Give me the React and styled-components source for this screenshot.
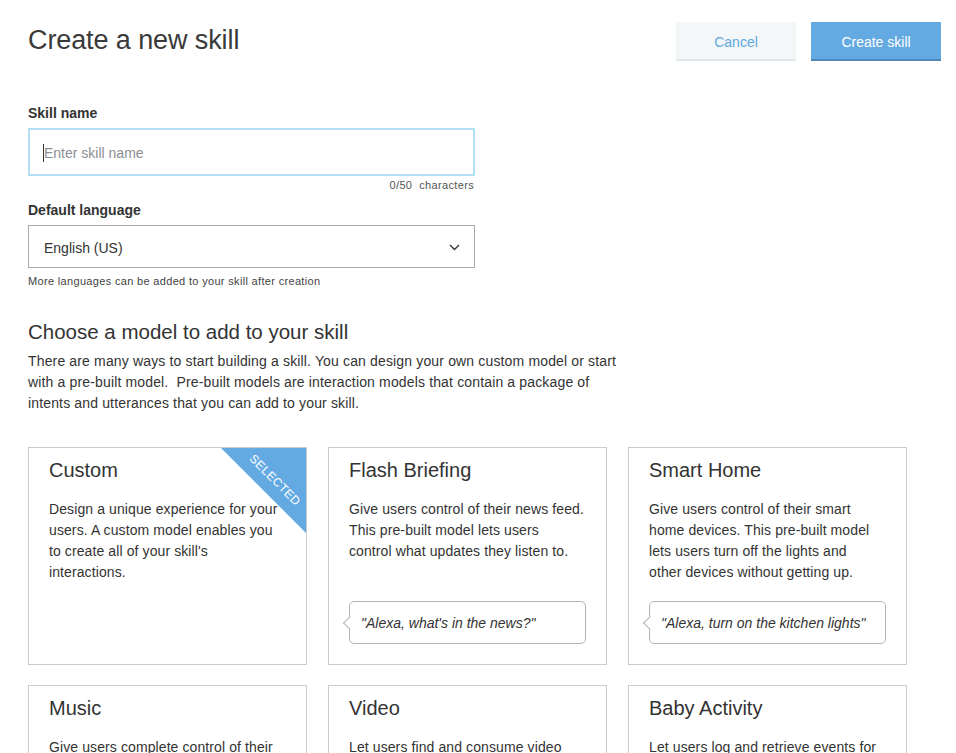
import React from "react";
import styled, { createGlobalStyle } from "styled-components";

const GlobalStyle = createGlobalStyle`
  html, body, #root { height: 100%; }
  body {
    margin: 0;
    background: #ffffff;
    color: #333333;
    font-family: "Liberation Sans", Arial, sans-serif;
  }
  * { box-sizing: border-box; }
`;

const Page = styled.div`
  height: 100vh;
  overflow: hidden;
  padding: 22px 15px 0 28px;
`;

const Header = styled.header`
  display: flex;
  justify-content: space-between;
  align-items: center;
  height: 39px;
`;

const Title = styled.h1`
  margin: 0 0 4px;
  font-size: 27px;
  font-weight: 400;
  line-height: 36px;
  color: #3a3a3a;
  letter-spacing: -0.1px;
`;

const ButtonRow = styled.div`
  display: flex;
  gap: 15px;
`;

const Button = styled.button`
  width: ${(p) => (p.$primary ? "130px" : "120px")};
  height: 39px;
  border: none;
  border-bottom: 2px solid ${(p) => (p.$primary ? "#4f88ba" : "#dfe7ea")};
  background: ${(p) => (p.$primary ? "#64aae2" : "#f3f7f8")};
  color: ${(p) => (p.$primary ? "#ffffff" : "#5ea8df")};
  font-family: inherit;
  font-size: 14px;
  padding: 3px 0 0;
  cursor: pointer;
`;

const Form = styled.section`
  width: 447px;
  margin-top: 42px;
`;

const Label = styled.div`
  font-size: 14px;
  font-weight: 700;
  line-height: 20px;
  color: #333333;
  margin-top: ${(p) => p.$mt || 0}px;
  margin-bottom: 5px;
`;

const InputWrap = styled.div`
  position: relative;
`;

const Input = styled.input`
  display: block;
  width: 100%;
  height: 48px;
  border: 2px solid #b2def6;
  outline: none;
  padding: 2px 14px 0;
  font-family: inherit;
  font-size: 14px;
  color: #333;
  &::placeholder { color: #8a8f94; }
`;

const Caret = styled.span`
  position: absolute;
  left: 15px;
  top: 16px;
  width: 1px;
  height: 18px;
  background: #333;
`;

const Counter = styled.div`
  text-align: right;
  font-size: 11px;
  line-height: 14px;
  margin-top: 2px;
  padding-right: 1px;
  color: #555;
  letter-spacing: 0.35px;
  white-space: pre;
`;

const Select = styled.div`
  display: flex;
  align-items: center;
  justify-content: space-between;
  height: 43px;
  border: 1px solid #a9a9a9;
  padding: 2px 14px 0 15px;
  font-size: 14px;
  color: #333;
`;

const Helper = styled.div`
  font-size: 11px;
  line-height: 14px;
  margin-top: 6px;
  letter-spacing: 0.33px;
  color: #444;
`;

const Heading = styled.h2`
  margin: 31px 0 6px;
  font-size: 20.5px;
  font-weight: 400;
  line-height: 26px;
  color: #333;
`;

const Intro = styled.p`
  margin: 0;
  width: 660px;
  font-size: 14px;
  line-height: 21px;
  letter-spacing: 0.15px;
  color: #333;
`;

const CardGrid = styled.div`
  margin-top: 33px;
  display: grid;
  grid-template-columns: repeat(3, 279px);
  column-gap: 21px;
  row-gap: 20px;
`;

const Card = styled.div`
  position: relative;
  height: 218px;
  border: 1px solid #cccccc;
  padding: 10px 20px 20px;
  display: flex;
  flex-direction: column;
  overflow: hidden;
`;

const CardTitle = styled.h3`
  margin: 0;
  font-size: 20px;
  font-weight: 400;
  line-height: 24px;
  color: #333;
`;

const CardText = styled.p`
  margin: 17px 0 0;
  font-size: 14px;
  line-height: 21px;
  letter-spacing: 0.1px;
  white-space: nowrap;
  color: #333;
`;

const Bubble = styled.div`
  position: relative;
  margin-top: auto;
  height: 43px;
  border: 1px solid #b4b4b4;
  border-radius: 5px;
  display: flex;
  align-items: center;
  padding: 0 11px;
  font-size: 14px;
  font-style: italic;
  color: #333;
  white-space: nowrap;
  &::before {
    content: "";
    position: absolute;
    left: -5.5px;
    top: 50%;
    width: 9px;
    height: 9px;
    margin-top: -4.5px;
    background: #fff;
    border-left: 1px solid #b4b4b4;
    border-bottom: 1px solid #b4b4b4;
    transform: rotate(45deg);
  }
`;

const Ribbon = styled.div`
  position: absolute;
  top: 0;
  right: 0;
  width: 85px;
  height: 85px;
  background: #64aae2;
  clip-path: polygon(0 0, 100% 0, 100% 100%);
`;

const RibbonText = styled.span`
  position: absolute;
  left: 54px;
  top: 32px;
  transform: translate(-50%, -50%) rotate(45deg);
  color: #fff;
  font-size: 12px;
  letter-spacing: 0.4px;
  text-transform: uppercase;
  white-space: nowrap;
`;

const Chevron = () => (
  <svg width="11" height="7" viewBox="0 0 11 7" fill="none">
    <polyline points="1,1 5.5,5.5 10,1" stroke="#333" strokeWidth="1.3" />
  </svg>
);

const cards = [
  {
    title: "Custom",
    lines: [
      "Design a unique experience for your",
      "users. A custom model enables you",
      "to create all of your skill's",
      "interactions.",
    ],
    selected: true,
  },
  {
    title: "Flash Briefing",
    lines: [
      "Give users control of their news feed.",
      "This pre-built model lets users",
      "control what updates they listen to.",
    ],
    quote: "\"Alexa, what's in the news?\"",
  },
  {
    title: "Smart Home",
    lines: [
      "Give users control of their smart",
      "home devices. This pre-built model",
      "lets users turn off the lights and",
      "other devices without getting up.",
    ],
    quote: "\"Alexa, turn on the kitchen lights\"",
  },
  {
    title: "Music",
    lines: [
      "Give users complete control of their",
      "music experience. This pre-built",
      "model lets users play songs.",
    ],
    quote: "\"Alexa, play some jazz\"",
  },
  {
    title: "Video",
    lines: [
      "Let users find and consume video",
      "content. This pre-built model",
      "supports content searches.",
    ],
    quote: "\"Alexa, play Interstellar\"",
  },
  {
    title: "Baby Activity",
    lines: [
      "Let users log and retrieve events for",
      "their baby. This pre-built model",
      "tracks feedings and diapers.",
    ],
    quote: "\"Alexa, log a wet diaper\"",
  },
];

export default function App() {
  return (
    <>
      <GlobalStyle />
      <Page>
        <Header>
          <Title>Create a new skill</Title>
          <ButtonRow>
            <Button>Cancel</Button>
            <Button $primary>Create skill</Button>
          </ButtonRow>
        </Header>

        <Form>
          <Label>Skill name</Label>
          <InputWrap>
            <Input placeholder="Enter skill name" />
            <Caret />
          </InputWrap>
          <Counter>{"0/50  characters"}</Counter>

          <Label $mt={8}>Default language</Label>
          <Select>
            <span>English (US)</span>
            <Chevron />
          </Select>
          <Helper>More languages can be added to your skill after creation</Helper>
        </Form>

        <Heading>Choose a model to add to your skill</Heading>
        <Intro>
          There are many ways to start building a skill. You can design your own custom model or start
          <br />
          with a pre-built model.&nbsp; Pre-built models are interaction models that contain a package of
          <br />
          intents and utterances that you can add to your skill.
        </Intro>

        <CardGrid>
          {cards.map((c) => (
            <Card key={c.title}>
              {c.selected && (
                <Ribbon>
                  <RibbonText>Selected</RibbonText>
                </Ribbon>
              )}
              <CardTitle>{c.title}</CardTitle>
              <CardText>
                {c.lines.map((l, i) => (
                  <React.Fragment key={i}>
                    {i > 0 && <br />}
                    {l}
                  </React.Fragment>
                ))}
              </CardText>
              {c.quote && <Bubble>{c.quote}</Bubble>}
            </Card>
          ))}
        </CardGrid>
      </Page>
    </>
  );
}
